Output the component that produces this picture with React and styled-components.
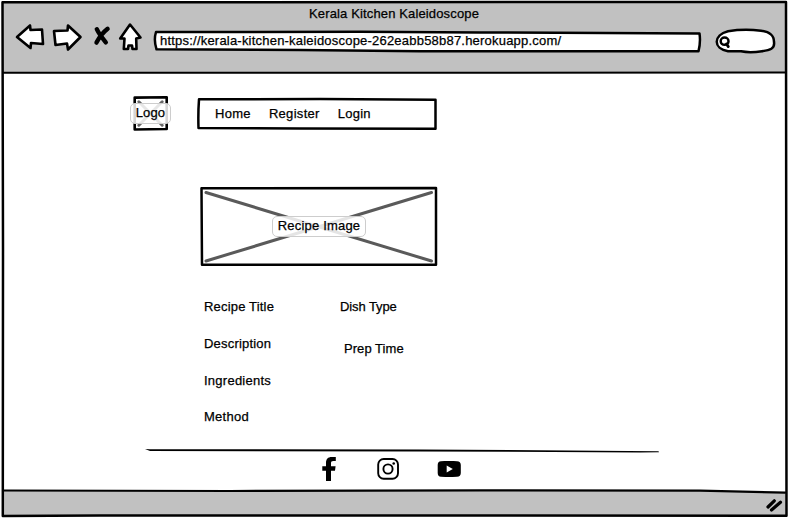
import React from "react";
import styled, { createGlobalStyle } from "styled-components";

const GlobalStyle = createGlobalStyle`
  *, *::before, *::after { box-sizing: border-box; }
  body { margin: 0; background: #fff; overflow: hidden; }
`;

const Window = styled.div`
  position: relative;
  width: 788px;
  height: 518px;
  padding: 2px 2px 2px 3px;
  display: flex;
  flex-direction: column;
  background: #fff;
  color: #000;
  font-family: "Liberation Sans", Arial, sans-serif;
  font-size: 13px;
  line-height: 16px;
`;

const Sketch = styled.svg`
  position: absolute;
  inset: 0;
  width: 100%;
  height: 100%;
  overflow: visible;
  pointer-events: none;
  fill: none;
  stroke: #000;
  stroke-width: ${(p) => p.$weight || 2.4};
  stroke-linejoin: round;
  stroke-linecap: round;
`;

const Label = styled.span`
  position: relative;
  white-space: nowrap;
  letter-spacing: ${(p) => p.$track || 0}px;
  -webkit-text-stroke: 0.25px #000;
`;

const Header = styled.header`
  flex: 0 0 70px;
  background: #c1c1c1;
  display: flex;
  flex-direction: column;
`;

const TitleBar = styled.div`
  height: 20px;
  padding: 4px 0 0 306px;
`;

const Toolbar = styled.div`
  display: flex;
  align-items: flex-start;
`;

const Controls = styled.svg`
  width: 130px;
  height: 34px;
  margin: 0 0 0 10px;
  stroke: #000;
  stroke-width: 2.6;
  stroke-linejoin: round;
  stroke-linecap: round;
  fill: #fff;
`;

const AddressBar = styled.div`
  position: relative;
  width: 546px;
  height: 21px;
  margin: 9px 0 0 11px;
  padding: 2px 0 0 6px;
`;

const SearchBox = styled.div`
  position: relative;
  width: 60px;
  height: 24px;
  margin: 7px 0 0 15px;
`;

const Page = styled.main`
  flex: 1;
  display: flex;
  flex-direction: column;
`;

const Masthead = styled.div`
  display: flex;
  gap: 29px;
  padding: 24px 0 0 130px;
`;

const Logo = styled.div`
  position: relative;
  width: 35px;
  height: 35px;
  display: flex;
  justify-content: center;
  padding-top: 7px;
`;

const Plate = styled.div`
  position: relative;
  flex: none;
  width: ${(p) => p.$width}px;
  height: 21px;
  padding-top: 1px;
  display: flex;
  justify-content: center;
  border: 1px solid #cdcdcd;
  border-radius: 5px;
  background: rgba(255, 255, 255, 0.84);
`;

const Nav = styled.nav`
  position: relative;
  width: 240px;
  height: 31px;
  margin-top: 2px;
  padding: 8px 0 0 18px;
  display: flex;
  gap: 18px;
`;

const Picture = styled.div`
  position: relative;
  width: 238px;
  height: 79px;
  margin: 56px 0 0 197px;
  display: flex;
  justify-content: center;
  padding-top: 29px;
`;

const Details = styled.section`
  display: grid;
  grid-template-columns: 136px 120px;
  margin: 33px 0 0 201px;
  height: 129px;
`;

const Column = styled.div`
  display: flex;
  flex-direction: column;
  gap: ${(p) => p.$gap}px;
`;

const Indented = styled.div`
  padding-left: 4px;
`;

const Rule = styled.svg`
  width: 516px;
  height: 8px;
  margin: 18px 0 0 142px;
  overflow: visible;
`;

const Social = styled.div`
  display: flex;
  align-items: center;
  height: 26px;
  margin: 2px 0 0 319px;
`;

const SocialIcon = styled.svg`
  flex: none;
  width: ${(p) => p.$w}px;
  height: ${(p) => p.$h}px;
  margin-right: ${(p) => p.$after || 0}px;
`;

const StatusBar = styled.footer`
  flex: 0 0 25px;
  background: #c1c1c1;
`;

export default function App() {
  return (
    <>
      <GlobalStyle />
      <Window>
        <Header>
          <TitleBar>
            <Label $track={0.14}>Kerala Kitchen Kaleidoscope</Label>
          </TitleBar>
          <Toolbar>
            <Controls viewBox="13 22 130 34">
              <path d="M17 37L30 25.5L30.5 30L42 29.5L43 44L31 43L30.5 48Z" />
              <path d="M54 31L67.5 30.5L68 25.5L80.5 37L68 49.5L67 43.5L55.5 45Z" />
              <path d="M96.8 29.2Q99 34 105.8 42.4M107.6 28.8Q101 34 96.5 42.6" fill="none" strokeWidth="4.4" />
              <path d="M130 24.5L140.5 37.5L136.2 38.5L136.5 49L132.5 49L132 45.5L128.5 45.5L128 49L123.8 49L124.5 38.5L120.2 38.5Z" />
            </Controls>
            <AddressBar>
              <Sketch viewBox="154 31 546 21" $weight="2.5">
                <path d="M156 32L360 31.8L480 32.4L699.5 33.5Q700.8 42 698.5 51.2L420 51.3L300 50L156.5 49.3Q153.5 40 156 32Z" fill="#fff" />
              </Sketch>
              <Label $track={0.21}>https://kerala-kitchen-kaleidoscope-262eabb58b87.herokuapp.com/</Label>
            </AddressBar>
            <SearchBox>
              <Sketch viewBox="715 29 60 24" $weight="2.5">
                <path d="M728 31.2Q744 28.8 761 30.7C770 32 774 35 774 42C775 49 770 50 762 51.2Q750 53 741 51.3L728 51.2C713 49 713 35 728 31.2Z" fill="#fff" />
                <ellipse cx="724.6" cy="41.2" rx="3.9" ry="3.6" />
                <path d="M726.5 44L728.3 46.6" strokeWidth="2.8" />
              </Sketch>
            </SearchBox>
          </Toolbar>
        </Header>

        <Page>
          <Masthead>
            <Logo>
              <Sketch viewBox="133 96 35 35" $weight="2.6">
                <path d="M134.7 97.6L166.7 97.3L166.7 129L134.7 129.5Z" />
                <path d="M138.8 101.8L162.2 125.2M162.2 101.8L138.8 125.2" stroke="#666" strokeWidth="3" />
              </Sketch>
              <Plate $width={41}><Label $track={0.15}>Logo</Label></Plate>
            </Logo>
            <Nav>
              <Sketch viewBox="197 98 240 31" $weight="2.5">
                <path d="M199 99.3L320 99L435.5 99.8L435.5 128.7L300 128.5L198.5 128Q198 113 199 99.3Z" />
              </Sketch>
              <Label $track={0.3}>Home</Label>
              <Label $track={0.3}>Register</Label>
              <Label $track={0.25}>Login</Label>
            </Nav>
          </Masthead>

          <Picture>
            <Sketch viewBox="200 187 238 79" $weight="2.5">
              <path d="M201.5 188.3L436 188L436 264.7L202 264.7Z" />
              <path d="M206 192.5L431.5 261M431.5 192.5L206 261" stroke="#5a5a5a" strokeWidth="3" />
            </Sketch>
            <Plate $width={94}><Label $track={0.2}>Recipe Image</Label></Plate>
          </Picture>

          <Details>
            <Column $gap={21}>
              <Label $track={0.18}>Recipe Title</Label>
              <Label $track={0.2}>Description</Label>
              <Column $gap={20}>
                <Label $track={0.25}>Ingredients</Label>
                <Label $track={0.27}>Method</Label>
              </Column>
            </Column>
            <Column $gap={26}>
              <Label $track={-0.1}>Dish Type</Label>
              <Indented><Label $track={0.05}>Prep Time</Label></Indented>
            </Column>
          </Details>

          <Rule viewBox="145 446 516 8">
            <path d="M145 449L150 449.3L420 449.4L658.5 451.2L659 452.3L640 452.5L420 451.4L150 451Z" />
          </Rule>

          <Social>
            <SocialIcon $w={14} $h={24} $after={41} viewBox="322 457 14 24">
              <path d="M326 481V470.8H322.3V466.2H326V463C326 459 328 457 331.6 457H335.8V461.1H333.3C331.6 461.1 331 461.8 331 463.2V466.2H335.6L335 470.8H331V481Z" />
            </SocialIcon>
            <SocialIcon $w={22} $h={22} $after={38} viewBox="377 458 22 22" fill="none" stroke="#000" strokeWidth="1.9">
              <rect x="378.2" y="459" width="19.8" height="19.8" rx="5.5" />
              <circle cx="388" cy="469" r="4.6" />
              <circle cx="393.7" cy="463.5" r="1.3" fill="#000" stroke="none" />
            </SocialIcon>
            <SocialIcon $w={24} $h={16} viewBox="437 461 24 16">
              <path d="M441 461.2Q449 460.6 457 461.2Q460.8 461.4 460.8 465V473Q460.8 476.6 457 476.8Q449 477.3 441 476.8Q437.7 476.6 437.7 473V465Q437.7 461.4 441 461.2Z" />
              <path d="M446.7 465.6L452.8 469L446.7 472.4Z" fill="#fff" />
            </SocialIcon>
          </Social>
        </Page>

        <StatusBar />
        <Sketch viewBox="0 0 788 518" $weight="2.5">
          <path d="M660 489H785V492L740 490.8Z" fill="#fff" stroke="none" />
          <path d="M2.5 2.2L786 2L786.5 515.8L430 515.5L100 515.5L2.8 516L3 250Z" />
          <path d="M3 72.8L350 72.8L786 72.5" strokeWidth="2" />
          <path d="M3 490.5L230 491L480 490.4L700 490.6L785 492.6" strokeWidth="2.2" />
          <path d="M768 507L774.3 500.8M771.5 510L780.5 502.3" strokeWidth="3.2" />
        </Sketch>
      </Window>
    </>
  );
}
